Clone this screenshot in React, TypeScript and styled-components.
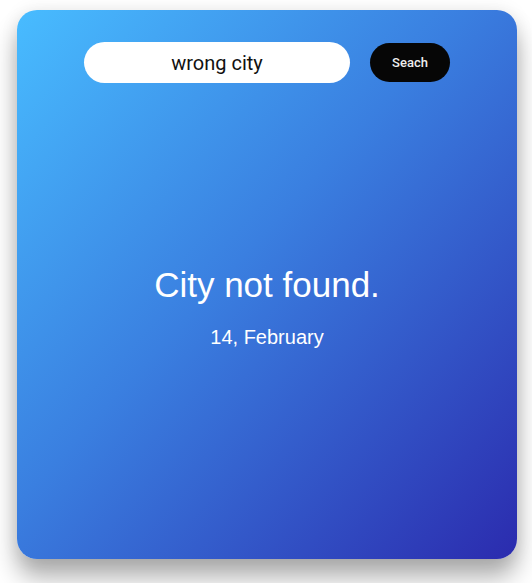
import React from 'react'
import styled, { createGlobalStyle } from 'styled-components'

const GlobalStyle = createGlobalStyle`
    html, body {
        margin: 0;
        padding: 0;
        background: #ffffff;
    }
    body {
        font-family: "Liberation Sans", Arial, sans-serif;
    }
`

const App = () => {
    return (
        <>
            <GlobalStyle />
            <Page>
                <Card>
                    <SearchBar>
                        <CityInput defaultValue="wrong city" />
                        <SearchButton>Seach</SearchButton>
                    </SearchBar>

                    <Message>
                        <Title>City not found.</Title>
                        <DateText>14, February</DateText>
                    </Message>
                </Card>
            </Page>
        </>
    )
}

export default App

const Page = styled.div`
    width: 532px;
    height: 583px;
    padding: 10px 15px 0 17px;
    box-sizing: border-box;
`

const Card = styled.div`
    width: 500px;
    height: 549px;
    border-radius: 20px;
    background: linear-gradient(to bottom right, #48bcff 0%, #3a7fe0 45%, #2b2bae 100%);
    box-shadow: 0 18px 24px rgba(0, 0, 0, 0.32), 0 0 18px rgba(0, 0, 0, 0.08);
    display: flex;
    flex-direction: column;
    align-items: center;
    box-sizing: border-box;
    padding-top: 32px;
`

const SearchBar = styled.div`
    display: flex;
    align-items: center;
    gap: 20px;
`

const CityInput = styled.input`
    width: 266px;
    height: 41px;
    box-sizing: border-box;
    border: none;
    outline: none;
    border-radius: 21px;
    background: #ffffff;
    text-align: center;
    font-family: Roboto, "Liberation Sans", sans-serif;
    font-size: 20px;
    color: #111111;
`

const SearchButton = styled.button`
    width: 80px;
    height: 39px;
    border: none;
    border-radius: 20px;
    background: #060606;
    color: #eeeeee;
    font-family: Roboto, "Liberation Sans", sans-serif;
    font-weight: 500;
    font-size: 13px;
    cursor: pointer;
`

const Message = styled.div`
    display: flex;
    flex-direction: column;
    align-items: center;
    margin-top: 182px;
    color: #ffffff;
`

const Title = styled.h1`
    margin: 0;
    font-family: "Liberation Sans", Arial, sans-serif;
    font-weight: 400;
    font-size: 35px;
    line-height: 40px;
`

const DateText = styled.p`
    margin: 20px 0 0;
    font-family: "Liberation Sans", Arial, sans-serif;
    font-size: 20px;
    line-height: 24px;
`
